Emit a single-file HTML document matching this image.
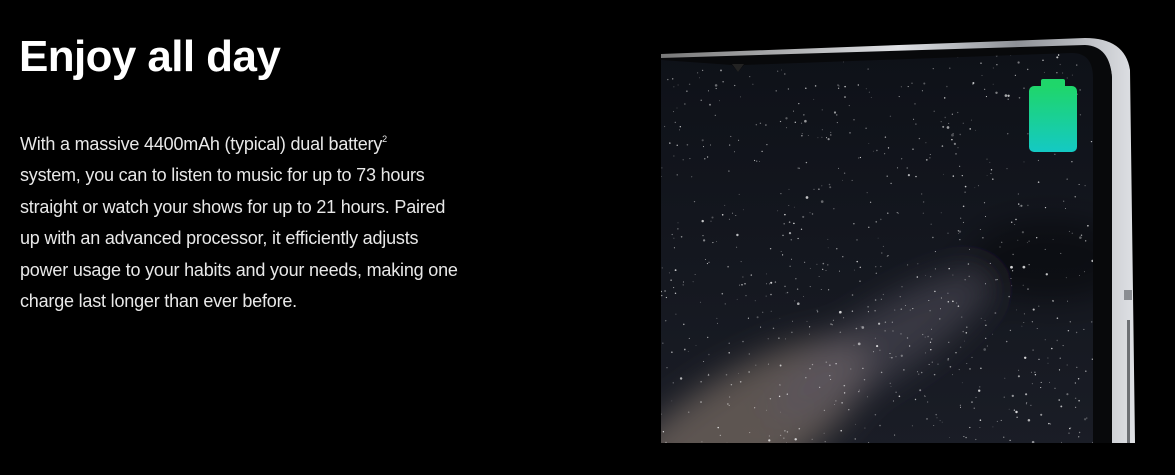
<!DOCTYPE html>
<html><head><meta charset="utf-8"><style>
html,body{margin:0;padding:0;background:#000;width:1175px;height:475px;overflow:hidden;}
h1{position:absolute;left:19px;top:35px;margin:0;font:bold 44px/1 "Liberation Sans",sans-serif;color:#fff;letter-spacing:-0.6px;}
.p{position:absolute;left:20px;top:129px;font:18px/31.4px "Liberation Sans",sans-serif;color:#e8e8e8;letter-spacing:-0.2px;white-space:nowrap;}
sup{font-size:9px;vertical-align:8px;line-height:0}
svg{position:absolute;left:0;top:0;display:block}
</style></head><body>
<h1>Enjoy all day</h1>
<div class="p">With a massive 4400mAh (typical) dual battery<sup>2</sup><br>system, you can to listen to music for up to 73 hours<br>straight or watch your shows for up to 21 hours. Paired<br>up with an advanced processor, it efficiently adjusts<br>power usage to your habits and your needs, making one<br>charge last longer than ever before.</div>
<svg width="1175" height="475" viewBox="0 0 1175 475">
<defs>
<linearGradient id="fr" x1="0" x2="1"><stop offset="0" stop-color="#777"/><stop offset=".5" stop-color="#e0e2e6"/><stop offset=".75" stop-color="#8d9096"/><stop offset="1" stop-color="#dfe1e5"/></linearGradient>
<linearGradient id="bat" x1="0" y1="0" x2="0" y2="1"><stop offset="0" stop-color="#1fd66a"/><stop offset="1" stop-color="#14c9c4"/></linearGradient>
<linearGradient id="sk" x1="0" y1="0" x2="0" y2="1"><stop offset="0" stop-color="#0e1118"/><stop offset="1" stop-color="#1a1d26"/></linearGradient>
<clipPath id="sc"><path d="M661 60 L732 65 L738 72 L744 65 L1072 53 Q1093 53 1093 78 L1093 443 L661 443 Z"/></clipPath>
<filter id="bl"><feGaussianBlur stdDeviation="16"/></filter>
</defs>
<path d="M661 54 L1085 38 Q1125 38 1130 70 L1135 443 L1112 443 L1112 78 Q1110 48 1085 47 L661 60 Z" fill="url(#fr)"/>
<path d="M661 58 L1085 45 Q1110 46 1112 78 L1112 443 L661 443 Z" fill="#08090b"/>
<rect x="1124" y="290" width="8" height="10" fill="#8a8d92"/>
<rect x="1127" y="320" width="3" height="123" fill="#6d7075"/>
<g clip-path="url(#sc)">
<rect x="661" y="50" width="440" height="400" fill="url(#sk)"/>
<g filter="url(#bl)">
<ellipse cx="740" cy="430" rx="150" ry="55" transform="rotate(-32 740 430)" fill="#8a7a6e" opacity=".6"/>
<ellipse cx="880" cy="345" rx="130" ry="35" transform="rotate(-32 880 345)" fill="#5a5664" opacity=".5"/>
<ellipse cx="1050" cy="260" rx="80" ry="40" fill="#000" opacity=".4"/>
</g>
<g id="stars" fill="#fff"></g>
</g>
<path d="M732 64 L738 72 L744 64 Z" fill="#222"/>
<rect x="1041" y="79" width="24" height="10" rx="2" fill="#1fd66a"/>
<rect x="1029" y="86" width="48" height="66" rx="5" fill="url(#bat)"/>
</svg>
<script>
var g=document.getElementById('stars'),s=7,h='';
function r(){s=(s*16807)%2147483647;return s/2147483647;}
for(var i=0;i<800;i++){var x=661+r()*432,y=55+r()*390,rad=r()<0.9?0.4+r()*0.4:0.9+r()*0.5;h+='<circle cx="'+x.toFixed(1)+'" cy="'+y.toFixed(1)+'" r="'+rad.toFixed(2)+'" opacity="'+(0.25+r()*0.6).toFixed(2)+'"/>';}
g.innerHTML=h;
</script>
</body></html>
